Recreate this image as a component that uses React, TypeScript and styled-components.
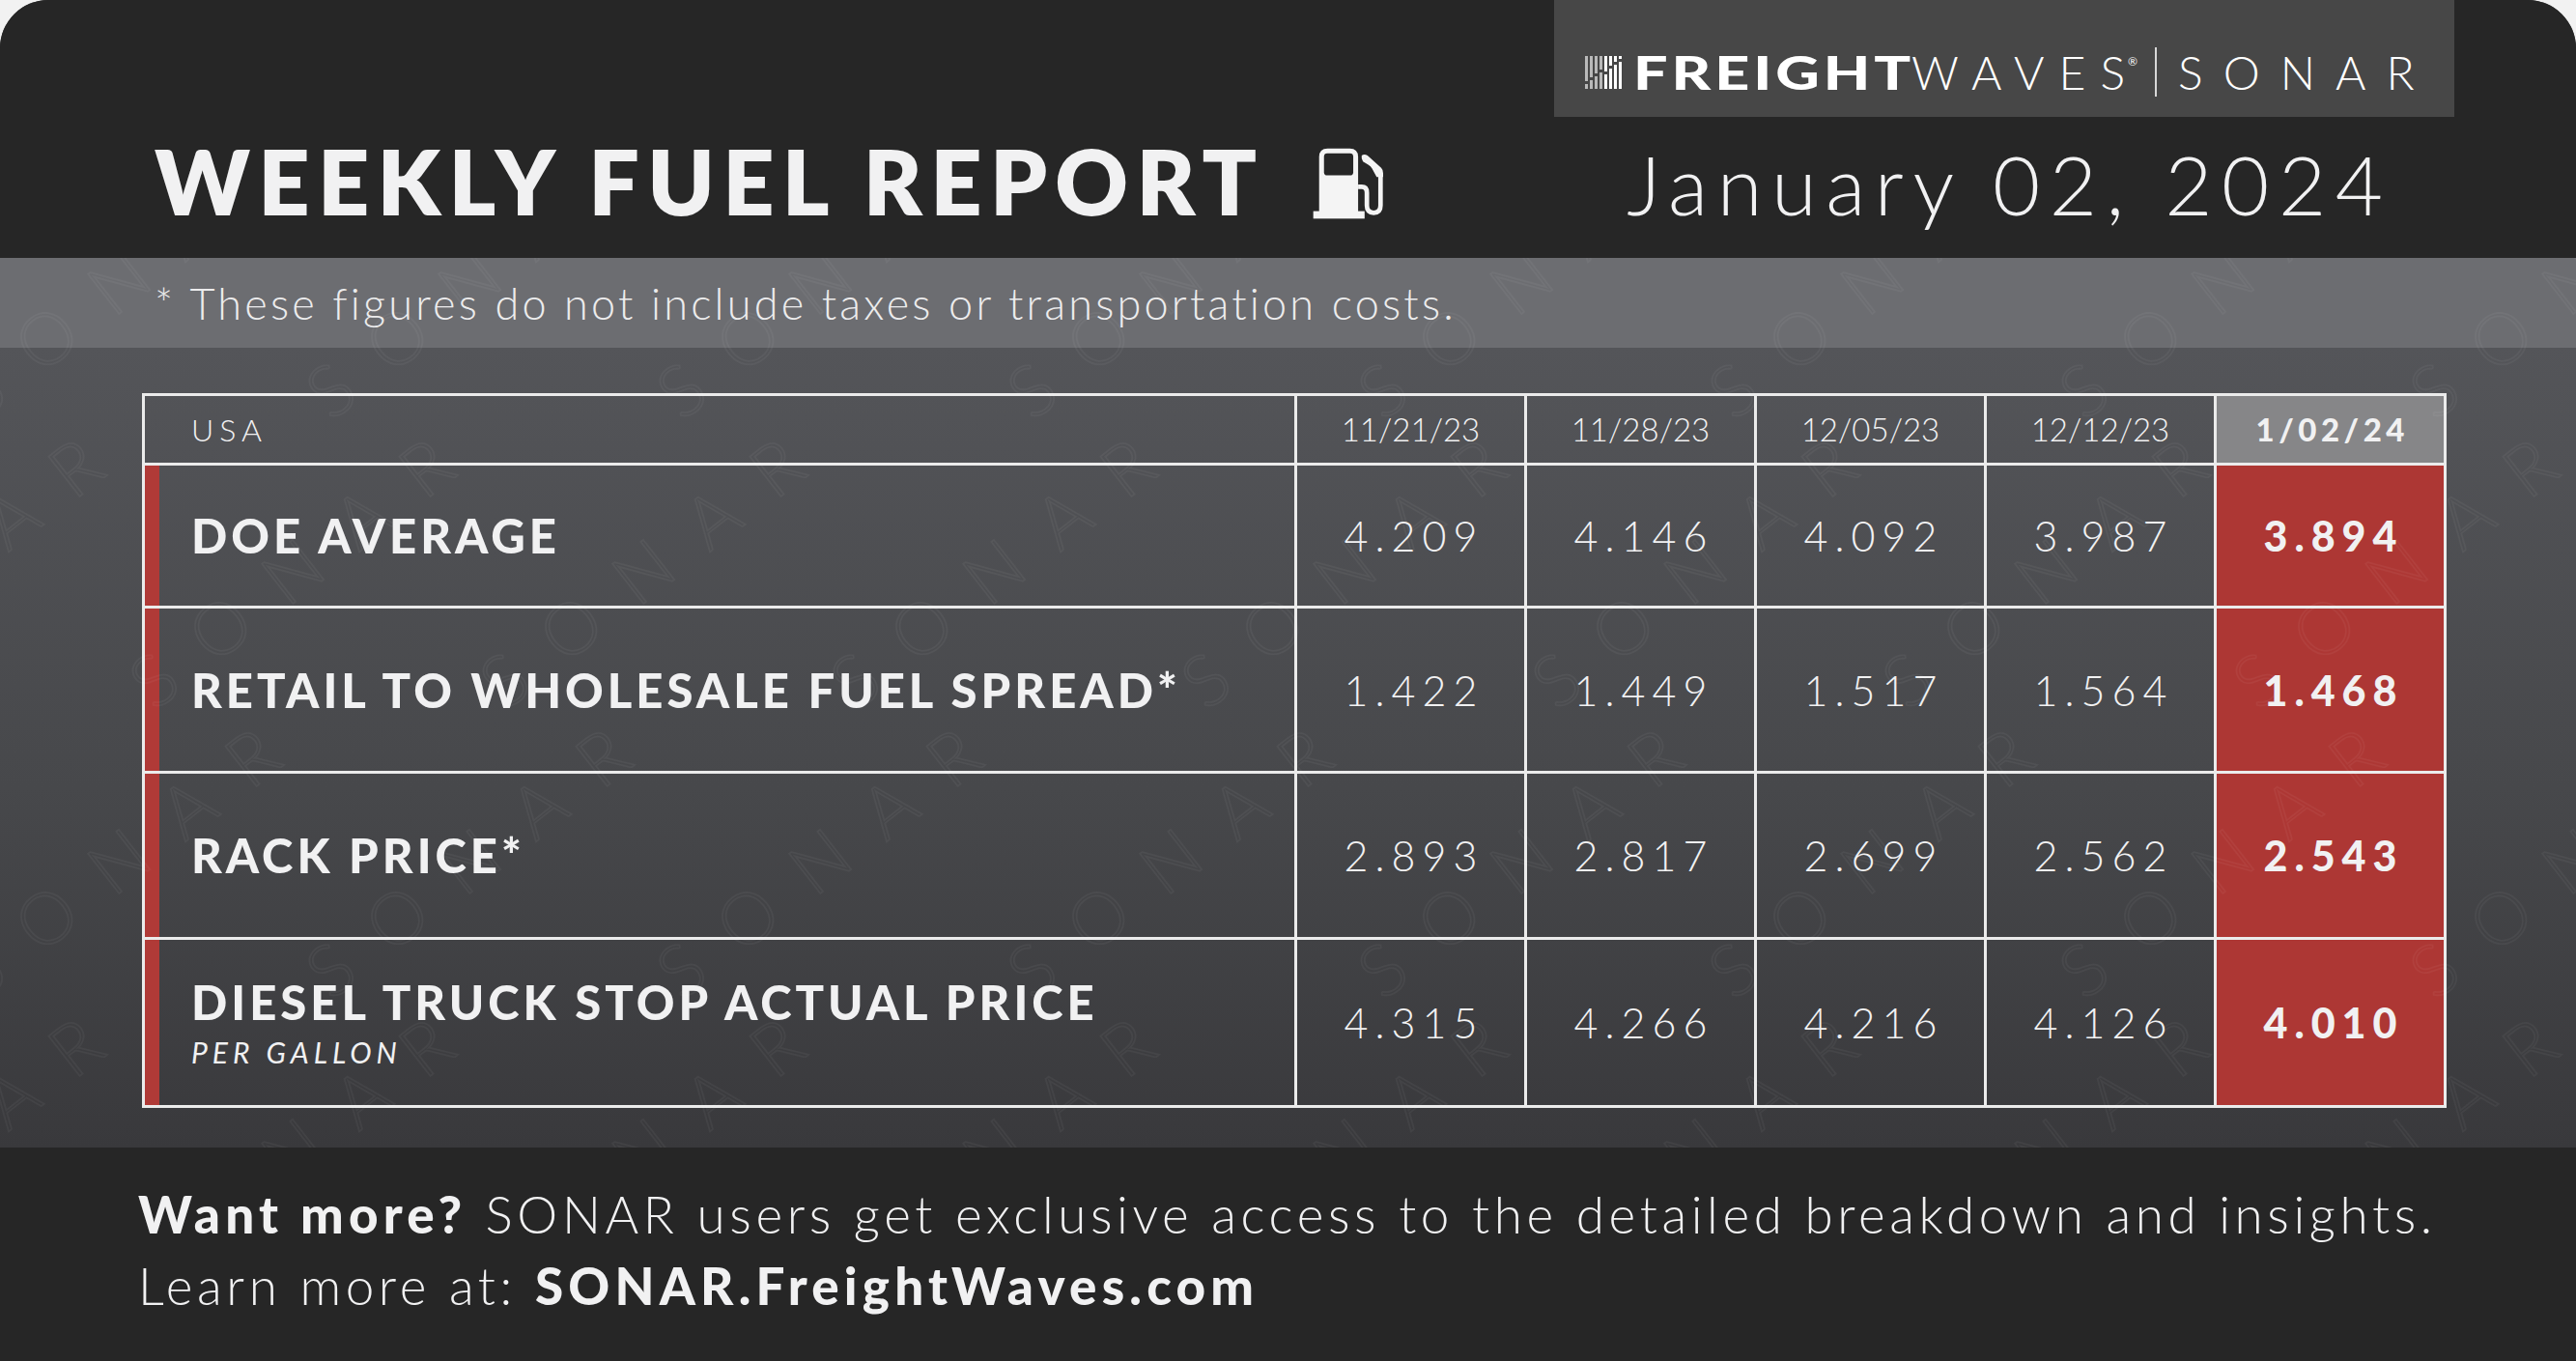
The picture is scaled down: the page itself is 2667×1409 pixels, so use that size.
import * as React from 'react';
import styled, { createGlobalStyle } from 'styled-components';

const GlobalStyle = createGlobalStyle`
  html, body {
    margin: 0;
    padding: 0;
    background: #f2f2f2;
  }
  body {
    font-family: 'Lato', 'Open Sans', sans-serif;
    color: #f1f1f2;
  }
  * {
    box-sizing: border-box;
  }
`;

const dates = ['11/21/23', '11/28/23', '12/05/23', '12/12/23', '1/02/24'];

interface Row {
  label: string;
  note?: string;
  height: number;
  values: string[];
}

const rows: Row[] = [
  { label: 'DOE AVERAGE', height: 148, values: ['4.209', '4.146', '4.092', '3.987', '3.894'] },
  { label: 'RETAIL TO WHOLESALE FUEL SPREAD*', height: 171, values: ['1.422', '1.449', '1.517', '1.564', '1.468'] },
  { label: 'RACK PRICE*', height: 172, values: ['2.893', '2.817', '2.699', '2.562', '2.543'] },
  { label: 'DIESEL TRUCK STOP ACTUAL PRICE', note: 'PER GALLON', height: 174, values: ['4.315', '4.266', '4.216', '4.126', '4.010'] },
];

const BAR_TOPS = [26, 22, 18, 14, 16, 10, 6, 3];

const WavesMark = () => (
  <svg width="40" height="34" viewBox="0 0 40 34">
    {BAR_TOPS.map((h, i) => (
      <g key={i} fill={i < 4 ? '#b9b9b9' : '#ffffff'}>
        <rect x={i * 5} y={0} width={3} height={h} />
        <rect x={i * 5} y={h + 3} width={3} height={31 - h} />
      </g>
    ))}
  </svg>
);

const FuelPump = () => (
  <svg width="74" height="74" viewBox="55 40 220 220">
    <path d="M75 245 V68 Q75 42 101 42 H169 Q195 42 195 68 V245 Z" fill="#f4f4f4" />
    <rect x="90" y="57" width="90" height="68" rx="10" fill="#262626" />
    <rect x="57" y="235" width="158" height="23" fill="#f4f4f4" />
    <path
      d="M195 160 H206 Q222 160 222 178 V218 Q222 240 243 240 Q264 240 264 218 V122"
      fill="none"
      stroke="#f4f4f4"
      strokeWidth="14"
    />
    <path d="M206 64 Q214 58 224 64 L266 102 Q272 108 272 118 V130 H252 L238 104 Q234 96 226 92 L210 82 Q204 74 206 64 Z" fill="#f4f4f4" />
  </svg>
);

// faint outlined "SONAR" tiled diagonally over the band and table area
const MARKS = [
  { x: 40, y: 290 },
  { x: 220, y: 590 },
];

const Watermark = () => (
  <WatermarkLayer width="100%" height="100%">
    <defs>
      <pattern id="sonar-mark" width="363" height="600" patternUnits="userSpaceOnUse" x="-60" y="-120">
        {MARKS.map((m, i) => (
          <g key={i}>
            {[-363, 0, 363].map((dx) => (
              <text
                key={dx}
                x="0"
                y="0"
                transform={`translate(${m.x + dx} ${m.y}) rotate(-38)`}
                fontFamily="Lato, sans-serif"
                fontWeight="300"
                fontSize="74"
                letterSpacing="38"
                fill="none"
                stroke="rgba(255,255,255,0.045)"
                strokeWidth="1.6"
              >
                SONAR
              </text>
            ))}
          </g>
        ))}
      </pattern>
    </defs>
    <rect width="100%" height="100%" fill="url(#sonar-mark)" />
  </WatermarkLayer>
);

export default function App() {
  return (
    <>
      <GlobalStyle />
      <Card>
        <Header>
          <LogoRow>
            <LogoBox>
              <WavesMark />
              <Freight>
                <FreightInner>FREIGHT</FreightInner>
              </Freight>
              <Waves>
                WAVE<LastLetter>S</LastLetter>
              </Waves>
              <Registered>®</Registered>
              <Divider />
              <Sonar>
                SONA<LastLetter>R</LastLetter>
              </Sonar>
            </LogoBox>
          </LogoRow>
          <TitleRow>
            <Title>
              WEEKLY FUEL REPORT
              <PumpSlot>
                <FuelPump />
              </PumpSlot>
            </Title>
            <DateText>January 02, 2024</DateText>
          </TitleRow>
        </Header>

        <Section>
          <Band>* These figures do not include taxes or transportation costs.</Band>
          <Body>
            <Table>
              <colgroup>
                <col style={{ width: 1193 }} />
                {dates.map((d) => (
                  <col key={d} style={{ width: 238 }} />
                ))}
              </colgroup>
              <thead>
                <tr style={{ height: 72 }}>
                  <RegionCell>USA</RegionCell>
                  {dates.map((d, i) => (
                    <DateCell key={d} $current={i === dates.length - 1}>
                      {d}
                    </DateCell>
                  ))}
                </tr>
              </thead>
              <tbody>
                {rows.map((row) => (
                  <tr key={row.label} style={{ height: row.height }}>
                    <LabelCell>
                      <LabelText>{row.label}</LabelText>
                      {row.note && <LabelNote>{row.note}</LabelNote>}
                    </LabelCell>
                    {row.values.map((v, i) => (
                      <ValueCell key={i} $current={i === row.values.length - 1}>
                        {v}
                      </ValueCell>
                    ))}
                  </tr>
                ))}
              </tbody>
            </Table>
          </Body>
          <Watermark />
        </Section>

        <Footer>
          <FooterLine>
            <Strong>Want more?</Strong> SONAR users get exclusive access to the detailed breakdown and insights.
          </FooterLine>
          <FooterLine>
            Learn more at: <Strong>SONAR.FreightWaves.com</Strong>
          </FooterLine>
        </Footer>
      </Card>
    </>
  );
}

const Card = styled.div`
  width: 2667px;
  height: 1409px;
  display: flex;
  flex-direction: column;
  overflow: hidden;
  border-radius: 50px 50px 0 0;
  background: #262626;
`;

const Header = styled.header`
  height: 267px;
  flex-shrink: 0;
  display: flex;
  flex-direction: column;
  background: #262626;
`;

const LogoRow = styled.div`
  height: 121px;
  display: flex;
  justify-content: flex-end;
  padding-right: 126px;
`;

const LogoBox = styled.div`
  width: 932px;
  height: 121px;
  background: #474747;
  display: flex;
  align-items: center;
  padding: 28px 0 0 32px;
  color: #ffffff;
  line-height: 1;
`;

const Freight = styled.span`
  display: inline-block;
  flex-shrink: 0;
  width: 282px;
  margin-left: 10px;
  font-size: 48px;
  font-weight: 900;
  white-space: nowrap;
`;

const FreightInner = styled.span`
  display: inline-block;
  letter-spacing: 3px;
  transform: scaleX(1.31);
  transform-origin: left center;
`;

const Waves = styled.span`
  margin-left: 6px;
  font-size: 48px;
  font-weight: 300;
  letter-spacing: 15px;
`;

const LastLetter = styled.span`
  letter-spacing: 0;
`;

const Registered = styled.span`
  align-self: flex-start;
  margin: 30px 0 0 3px;
  font-size: 12px;
  line-height: 1;
`;

const Divider = styled.span`
  width: 2px;
  height: 51px;
  background: #d8d8d8;
  margin: 0 22px 0 18px;
`;

const Sonar = styled.span`
  font-size: 48px;
  font-weight: 300;
  letter-spacing: 21px;
`;

const TitleRow = styled.div`
  flex: 1;
  display: flex;
  align-items: baseline;
  justify-content: space-between;
  padding: 20px 200px 0 160px;
`;

const Title = styled.h1`
  margin: 0;
  font-size: 93px;
  font-weight: 800;
  line-height: 1;
  letter-spacing: 8.3px;
  color: #f1f1f2;
  white-space: nowrap;
`;

const PumpSlot = styled.span`
  display: inline-block;
  margin-left: 50px;
  vertical-align: -4px;
  line-height: 0;
`;

const DateText = styled.div`
  font-size: 85px;
  font-weight: 300;
  line-height: 1;
  letter-spacing: 9.5px;
  margin-right: -9.5px;
  color: #f1f1f2;
`;

const Section = styled.section`
  position: relative;
  flex-shrink: 0;
  display: flex;
  flex-direction: column;
`;

const WatermarkLayer = styled.svg`
  position: absolute;
  inset: 0;
  pointer-events: none;
`;

const Band = styled.div`
  height: 93px;
  padding: 25px 0 0 160px;
  background: #6c6d71;
  font-size: 45px;
  font-weight: 300;
  line-height: 1;
  letter-spacing: 3.2px;
  color: #ececed;
`;

const Body = styled.div`
  height: 828px;
  padding: 47px 0 0 147px;
  background: linear-gradient(180deg, #545559 0%, #47484b 55%, #39393c 100%);
`;

const Table = styled.table`
  width: 2383px;
  table-layout: fixed;
  border-collapse: collapse;
  border: 3px solid #ebebeb;
`;

const Cell = styled.td`
  border: 3px solid #ebebeb;
  padding: 0;
  vertical-align: middle;
  line-height: 1;
`;

const RegionCell = styled(Cell).attrs({ as: 'th' })`
  text-align: left;
  padding-left: 48px;
  font-size: 32px;
  font-weight: 300;
  letter-spacing: 6px;
`;

const DateCell = styled(Cell).attrs({ as: 'th' })<{ $current: boolean }>`
  text-align: center;
  font-size: 33px;
  font-weight: ${(p) => (p.$current ? 900 : 300)};
  letter-spacing: ${(p) => (p.$current ? '4.5px' : '0')};
  padding-left: ${(p) => (p.$current ? '4.5px' : '0')};
  background: ${(p) => (p.$current ? '#868688' : 'transparent')};
`;

const LabelCell = styled(Cell)`
  padding-left: 48px;
  box-shadow: inset 15px 0 0 #b03a37;
`;

const LabelText = styled.div`
  font-size: 49px;
  font-weight: 900;
  letter-spacing: 4px;
`;

const LabelNote = styled.div`
  margin-top: 12px;
  font-size: 30px;
  font-weight: 400;
  font-style: italic;
  letter-spacing: 5px;
`;

const ValueCell = styled(Cell)<{ $current: boolean }>`
  text-align: center;
  font-size: 43px;
  font-weight: ${(p) => (p.$current ? 900 : 300)};
  letter-spacing: 7px;
  padding-left: 7px;
  background: ${(p) => (p.$current ? '#ad3734' : 'transparent')};
`;

const Footer = styled.footer`
  flex: 1;
  padding: 32px 0 0 143px;
  background: #262626;
`;

const FooterLine = styled.div`
  font-size: 53px;
  font-weight: 300;
  line-height: 74px;
  letter-spacing: 4.6px;
  color: #f1f1f2;
  white-space: nowrap;
`;

const Strong = styled.strong`
  font-weight: 900;
  letter-spacing: 5.2px;
`;
